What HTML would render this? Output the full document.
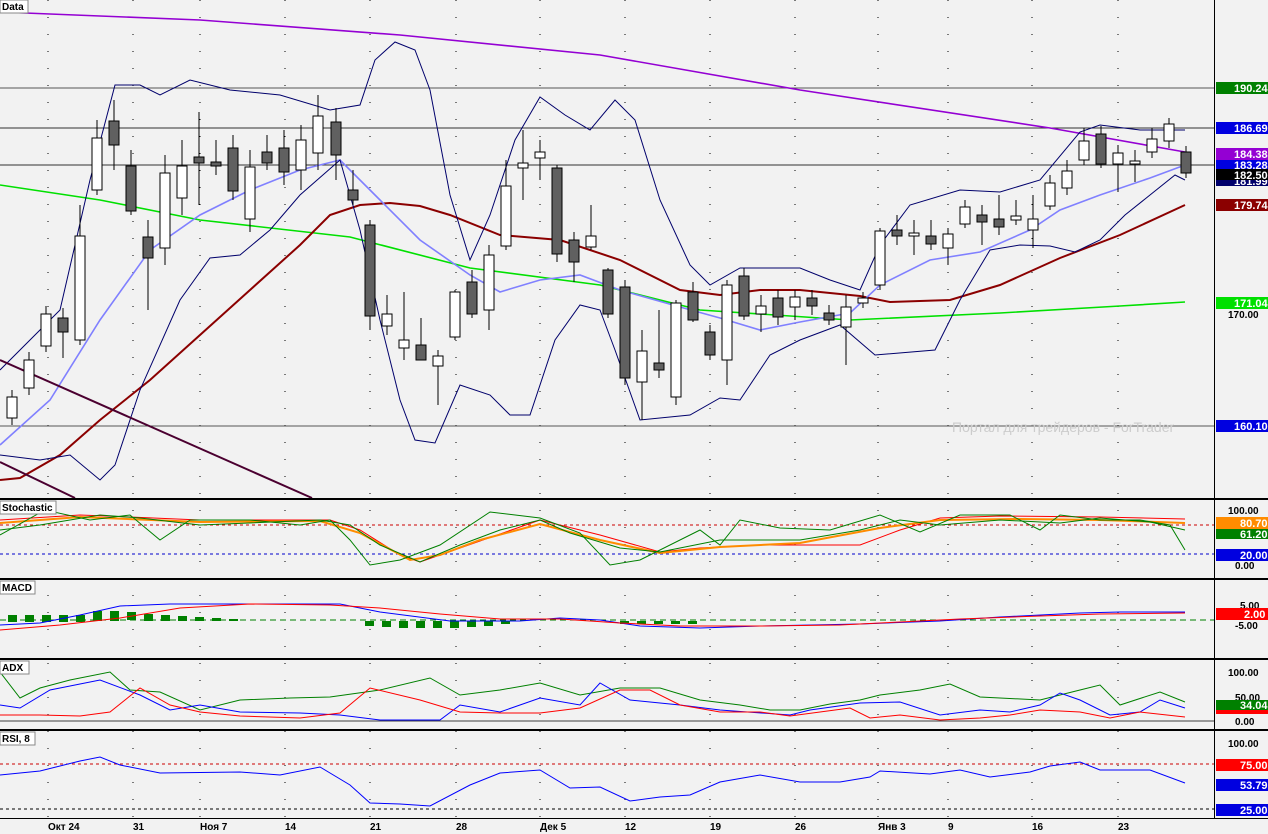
<!DOCTYPE html><html><head><meta charset="utf-8"><style>
body{margin:0;background:#f2f2f2;width:1268px;height:834px;overflow:hidden;font-family:"Liberation Sans",sans-serif}
svg{display:block}
text{font-family:"Liberation Sans",sans-serif;font-size:10px;font-weight:bold}
.lb{fill:#fff;font-size:11px}
</style></head><body>
<svg width="1268" height="834" viewBox="0 0 1268 834">
<rect width="1268" height="834" fill="#f2f2f2"/>
<g stroke="#000" stroke-width="1" stroke-dasharray="1,16" fill="none">
<line x1="48" y1="0" x2="48" y2="818"/><line x1="133" y1="0" x2="133" y2="818"/><line x1="200" y1="0" x2="200" y2="818"/><line x1="285" y1="0" x2="285" y2="818"/><line x1="370" y1="0" x2="370" y2="818"/><line x1="456" y1="0" x2="456" y2="818"/><line x1="540" y1="0" x2="540" y2="818"/><line x1="625" y1="0" x2="625" y2="818"/><line x1="710" y1="0" x2="710" y2="818"/><line x1="795" y1="0" x2="795" y2="818"/><line x1="878" y1="0" x2="878" y2="818"/><line x1="948" y1="0" x2="948" y2="818"/><line x1="1032" y1="0" x2="1032" y2="818"/><line x1="1118" y1="0" x2="1118" y2="818"/>
</g>
<!-- horizontal lines -->
<g stroke-width="1">
<line x1="0" y1="88" x2="1214" y2="88" stroke="#555"/>
<line x1="0" y1="128" x2="1214" y2="128" stroke="#333"/>
<line x1="0" y1="165" x2="1214" y2="165" stroke="#333"/>
<line x1="0" y1="426" x2="1214" y2="426" stroke="#555"/>
</g>
<text x="952" y="432" style="font-size:14px;font-weight:normal;fill:#ccc">Портал для трейдеров - ForTrader</text>
<g fill="none" stroke-width="1.6">
<polyline stroke="#9400d3" points="0,12 200,20 400,35 600,55 800,90 1050,128 1185,152"/>
<polyline stroke="#00e000" points="0,185 100,200 200,220 350,237 470,268 600,285 700,310 850,320 1000,313 1120,306 1185,302"/>
<polyline stroke="#8b0000" stroke-width="2" points="0,480 20,478 60,455 100,420 150,380 200,335 250,290 300,245 330,215 360,205 390,203 420,206 450,215 500,235 560,240 620,260 680,290 720,295 760,290 800,290 860,296 890,302 950,300 1000,285 1060,258 1120,235 1185,205"/>
<polyline stroke="#8080ff" points="0,445 50,400 100,320 150,250 200,215 250,190 300,170 340,160 380,200 420,240 470,275 500,292 540,280 580,275 620,290 680,307 720,318 760,330 800,322 850,313 880,285 930,260 980,252 1030,230 1060,210 1100,195 1150,178 1185,165"/>
<polyline stroke="#00006b" stroke-width="1" points="0,370 60,310 90,180 115,85 140,85 160,95 190,80 230,90 280,95 330,110 360,105 375,60 395,42 415,50 430,90 450,195 470,260 490,215 515,140 540,97 565,115 590,130 615,100 635,120 660,200 690,265 710,285 740,268 800,268 830,280 860,290 880,245 910,205 960,190 1000,192 1040,180 1080,132 1100,125 1140,130 1185,130"/>
<polyline stroke="#00006b" stroke-width="1" points="0,455 40,460 70,455 100,480 115,465 140,390 180,300 210,258 240,255 270,230 300,195 340,160 360,230 380,320 400,400 415,440 435,443 460,385 490,395 510,415 530,415 555,340 580,305 600,310 615,350 640,420 690,415 720,398 740,400 770,355 800,340 840,325 875,355 935,350 960,300 990,250 1020,245 1050,246 1075,252 1100,240 1125,215 1150,195 1175,175 1185,180"/>
<line x1="0" y1="360" x2="312" y2="498" stroke="#4b0030" stroke-width="2"/>
<line x1="0" y1="462" x2="75" y2="498" stroke="#4b0030" stroke-width="2"/>
</g>
<g stroke="#000" stroke-width="1">
<!-- candles: wick + body -->
<g id="c">
<line x1="12" y1="390" x2="12" y2="425"/><rect x="7" y="397" width="10" height="21" fill="#fff"/>
<line x1="29" y1="352" x2="29" y2="395"/><rect x="24" y="360" width="10" height="28" fill="#fff"/>
<line x1="46" y1="306" x2="46" y2="352"/><rect x="41" y="314" width="10" height="32" fill="#fff"/>
<line x1="63" y1="308" x2="63" y2="358"/><rect x="58" y="318" width="10" height="14" fill="#606060"/>
<line x1="80" y1="205" x2="80" y2="345"/><rect x="75" y="236" width="10" height="104" fill="#fff"/>
<line x1="97" y1="120" x2="97" y2="195"/><rect x="92" y="138" width="10" height="52" fill="#fff"/>
<line x1="114" y1="100" x2="114" y2="170"/><rect x="109" y="121" width="10" height="24" fill="#606060"/>
<line x1="131" y1="150" x2="131" y2="215"/><rect x="126" y="166" width="10" height="45" fill="#606060"/>
<line x1="148" y1="220" x2="148" y2="310"/><rect x="143" y="237" width="10" height="21" fill="#606060"/>
<line x1="165" y1="155" x2="165" y2="265"/><rect x="160" y="173" width="10" height="75" fill="#fff"/>
<line x1="182" y1="140" x2="182" y2="215"/><rect x="177" y="166" width="10" height="32" fill="#fff"/>
<line x1="199" y1="112" x2="199" y2="205"/><rect x="194" y="157" width="10" height="6" fill="#606060"/>
<line x1="216" y1="140" x2="216" y2="175"/><rect x="211" y="162" width="10" height="4" fill="#606060"/>
<line x1="233" y1="135" x2="233" y2="200"/><rect x="228" y="148" width="10" height="43" fill="#606060"/>
<line x1="250" y1="150" x2="250" y2="232"/><rect x="245" y="167" width="10" height="52" fill="#fff"/>
<line x1="267" y1="135" x2="267" y2="170"/><rect x="262" y="152" width="10" height="11" fill="#606060"/>
<line x1="284" y1="130" x2="284" y2="185"/><rect x="279" y="148" width="10" height="24" fill="#606060"/>
<line x1="301" y1="125" x2="301" y2="190"/><rect x="296" y="140" width="10" height="30" fill="#fff"/>
<line x1="318" y1="95" x2="318" y2="170"/><rect x="313" y="116" width="10" height="37" fill="#fff"/>
<line x1="336" y1="108" x2="336" y2="180"/><rect x="331" y="122" width="10" height="33" fill="#606060"/>
<line x1="353" y1="170" x2="353" y2="205"/><rect x="348" y="190" width="10" height="10" fill="#606060"/>
<line x1="370" y1="220" x2="370" y2="330"/><rect x="365" y="225" width="10" height="91" fill="#606060"/>
<line x1="387" y1="295" x2="387" y2="335"/><rect x="382" y="314" width="10" height="12" fill="#fff"/>
<line x1="404" y1="292" x2="404" y2="360"/><rect x="399" y="340" width="10" height="8" fill="#fff"/>
<line x1="421" y1="318" x2="421" y2="360"/><rect x="416" y="345" width="10" height="15" fill="#606060"/>
<line x1="438" y1="350" x2="438" y2="405"/><rect x="433" y="356" width="10" height="10" fill="#fff"/>
<line x1="455" y1="290" x2="455" y2="340"/><rect x="450" y="292" width="10" height="45" fill="#fff"/>
<line x1="472" y1="270" x2="472" y2="318"/><rect x="467" y="282" width="10" height="32" fill="#606060"/>
<line x1="489" y1="245" x2="489" y2="330"/><rect x="484" y="255" width="10" height="55" fill="#fff"/>
<line x1="506" y1="160" x2="506" y2="250"/><rect x="501" y="186" width="10" height="60" fill="#fff"/>
<line x1="523" y1="130" x2="523" y2="200"/><rect x="518" y="163" width="10" height="5" fill="#fff"/>
<line x1="540" y1="140" x2="540" y2="180"/><rect x="535" y="152" width="10" height="6" fill="#fff"/>
<line x1="557" y1="165" x2="557" y2="262"/><rect x="552" y="168" width="10" height="86" fill="#606060"/>
<line x1="574" y1="232" x2="574" y2="282"/><rect x="569" y="240" width="10" height="22" fill="#606060"/>
<line x1="591" y1="205" x2="591" y2="250"/><rect x="586" y="236" width="10" height="11" fill="#fff"/>
<line x1="608" y1="268" x2="608" y2="318"/><rect x="603" y="270" width="10" height="44" fill="#606060"/>
<line x1="625" y1="280" x2="625" y2="385"/><rect x="620" y="287" width="10" height="91" fill="#606060"/>
<line x1="642" y1="330" x2="642" y2="420"/><rect x="637" y="351" width="10" height="31" fill="#fff"/>
<line x1="659" y1="310" x2="659" y2="378"/><rect x="654" y="363" width="10" height="7" fill="#606060"/>
<line x1="676" y1="300" x2="676" y2="405"/><rect x="671" y="303" width="10" height="94" fill="#fff"/>
<line x1="693" y1="282" x2="693" y2="322"/><rect x="688" y="292" width="10" height="28" fill="#606060"/>
<line x1="710" y1="325" x2="710" y2="360"/><rect x="705" y="332" width="10" height="23" fill="#606060"/>
<line x1="727" y1="280" x2="727" y2="385"/><rect x="722" y="285" width="10" height="75" fill="#fff"/>
<line x1="744" y1="268" x2="744" y2="320"/><rect x="739" y="276" width="10" height="40" fill="#606060"/>
<line x1="761" y1="295" x2="761" y2="332"/><rect x="756" y="306" width="10" height="8" fill="#fff"/>
<line x1="778" y1="290" x2="778" y2="325"/><rect x="773" y="298" width="10" height="19" fill="#606060"/>
<line x1="795" y1="290" x2="795" y2="320"/><rect x="790" y="297" width="10" height="10" fill="#fff"/>
<line x1="812" y1="290" x2="812" y2="315"/><rect x="807" y="298" width="10" height="8" fill="#606060"/>
<line x1="829" y1="305" x2="829" y2="325"/><rect x="824" y="313" width="10" height="7" fill="#606060"/>
<line x1="846" y1="295" x2="846" y2="365"/><rect x="841" y="307" width="10" height="20" fill="#fff"/>
<line x1="863" y1="292" x2="863" y2="308"/><rect x="858" y="298" width="10" height="5" fill="#fff"/>
<line x1="880" y1="228" x2="880" y2="290"/><rect x="875" y="231" width="10" height="54" fill="#fff"/>
<line x1="897" y1="215" x2="897" y2="245"/><rect x="892" y="230" width="10" height="6" fill="#606060"/>
<line x1="914" y1="220" x2="914" y2="255"/><rect x="909" y="233" width="10" height="3" fill="#fff"/>
<line x1="931" y1="220" x2="931" y2="250"/><rect x="926" y="236" width="10" height="8" fill="#606060"/>
<line x1="948" y1="228" x2="948" y2="265"/><rect x="943" y="234" width="10" height="14" fill="#fff"/>
<line x1="965" y1="200" x2="965" y2="228"/><rect x="960" y="207" width="10" height="17" fill="#fff"/>
<line x1="982" y1="205" x2="982" y2="245"/><rect x="977" y="215" width="10" height="7" fill="#606060"/>
<line x1="999" y1="195" x2="999" y2="235"/><rect x="994" y="219" width="10" height="8" fill="#606060"/>
<line x1="1016" y1="200" x2="1016" y2="225"/><rect x="1011" y="216" width="10" height="4" fill="#fff"/>
<line x1="1033" y1="195" x2="1033" y2="248"/><rect x="1028" y="219" width="10" height="11" fill="#fff"/>
<line x1="1050" y1="175" x2="1050" y2="210"/><rect x="1045" y="183" width="10" height="23" fill="#fff"/>
<line x1="1067" y1="160" x2="1067" y2="195"/><rect x="1062" y="171" width="10" height="17" fill="#fff"/>
<line x1="1084" y1="128" x2="1084" y2="165"/><rect x="1079" y="141" width="10" height="19" fill="#fff"/>
<line x1="1101" y1="126" x2="1101" y2="168"/><rect x="1096" y="134" width="10" height="30" fill="#606060"/>
<line x1="1118" y1="145" x2="1118" y2="192"/><rect x="1113" y="153" width="10" height="11" fill="#fff"/>
<line x1="1135" y1="150" x2="1135" y2="182"/><rect x="1130" y="161" width="10" height="3" fill="#fff"/>
<line x1="1152" y1="128" x2="1152" y2="158"/><rect x="1147" y="139" width="10" height="13" fill="#fff"/>
<line x1="1169" y1="118" x2="1169" y2="148"/><rect x="1164" y="124" width="10" height="17" fill="#fff"/>
<line x1="1186" y1="146" x2="1186" y2="178"/><rect x="1181" y="152" width="10" height="21" fill="#606060"/>
</g>
</g>

<!-- stochastic -->
<g fill="none" stroke-width="1">
<line x1="0" y1="525" x2="1214" y2="525" stroke="#c00" stroke-dasharray="3,3"/>
<line x1="0" y1="554" x2="1214" y2="554" stroke="#00c" stroke-dasharray="3,3"/>
<polyline stroke="#f00" points="0,520 80,515 130,517 200,520 330,520 360,530 400,555 420,562 460,548 540,520 600,535 660,552 700,548 760,545 860,545 900,530 940,518 1000,516 1100,517 1185,519"/>
<polyline stroke="#ff8c00" stroke-width="2" points="0,523 80,517 200,522 320,521 360,533 410,560 440,555 480,540 540,524 600,540 660,553 720,547 800,543 880,528 940,520 1020,519 1100,520 1185,523"/>
<polyline stroke="#008000" points="0,530 40,525 100,515 140,518 200,525 320,520 350,525 380,545 420,562 460,545 500,530 540,520 570,533 620,548 660,552 720,540 800,540 860,530 900,520 940,525 1000,520 1060,523 1100,518 1150,522 1185,530"/>
<polyline stroke="#008000" points="0,535 45,510 90,520 130,515 160,540 190,520 250,520 300,525 330,520 350,540 370,565 400,560 440,545 490,512 540,518 580,533 610,565 640,560 700,530 720,545 740,520 780,528 830,530 880,515 920,532 960,515 1010,515 1040,530 1060,515 1100,520 1140,520 1170,525 1185,550"/>
</g>
<!-- MACD -->
<g fill="none">
<line x1="0" y1="620" x2="1214" y2="620" stroke="#008000" stroke-dasharray="6,4"/>
<g fill="#008000">
<rect x="8" y="615" width="9" height="7"/><rect x="25" y="615" width="9" height="7"/><rect x="42" y="615" width="9" height="7"/><rect x="59" y="615" width="9" height="7"/><rect x="76" y="615" width="9" height="7"/><rect x="93" y="611" width="9" height="10"/><rect x="110" y="611" width="9" height="10"/><rect x="127" y="612" width="9" height="8"/><rect x="144" y="614" width="9" height="7"/><rect x="161" y="615" width="9" height="6"/><rect x="178" y="616" width="9" height="5"/><rect x="195" y="617" width="9" height="4"/><rect x="212" y="618" width="9" height="3"/><rect x="229" y="619" width="9" height="2"/>
<rect x="365" y="621" width="9" height="5"/><rect x="382" y="621" width="9" height="6"/><rect x="399" y="621" width="9" height="7"/><rect x="416" y="621" width="9" height="7"/><rect x="433" y="621" width="9" height="7"/><rect x="450" y="621" width="9" height="7"/><rect x="467" y="621" width="9" height="6"/><rect x="484" y="621" width="9" height="5"/><rect x="501" y="621" width="9" height="3"/>
<rect x="620" y="621" width="9" height="3"/><rect x="637" y="621" width="9" height="3"/><rect x="654" y="621" width="9" height="3"/><rect x="671" y="621" width="9" height="3"/><rect x="688" y="621" width="9" height="3"/>
</g>
<polyline stroke="#00f" points="0,625 40,623 80,615 120,606 170,604 250,604 340,604 380,612 450,621 520,621 560,618 600,620 640,626 700,628 760,626 860,624 940,621 1000,617 1080,613 1120,612 1185,612"/>
<polyline stroke="#f00" points="0,630 60,625 120,618 180,608 250,604 330,605 380,608 440,614 500,619 560,619 620,623 680,626 760,626 840,625 900,622 960,619 1040,616 1100,614 1185,613"/>
</g>
<!-- ADX -->
<g fill="none">
<polyline stroke="#008000" points="0,672 20,698 40,688 70,680 110,672 130,690 160,692 200,710 240,700 290,698 330,697 380,690 430,678 460,695 500,690 540,683 580,695 620,688 660,688 700,700 740,705 770,710 800,710 830,704 860,700 880,695 920,690 950,684 980,697 1000,698 1040,700 1080,690 1100,685 1120,705 1160,692 1185,702"/>
<polyline stroke="#00f" points="0,705 20,708 50,690 100,680 140,695 170,710 200,705 240,712 300,713 340,715 380,720 440,720 460,705 500,712 540,698 580,705 600,683 630,700 680,705 720,710 790,715 810,710 860,703 900,702 940,715 980,710 1010,712 1040,705 1060,693 1080,700 1110,715 1140,712 1160,700 1185,708"/>
<polyline stroke="#f00" points="0,715 40,715 80,716 110,712 140,688 170,705 200,712 240,716 300,718 340,713 370,688 420,700 460,712 500,713 540,713 580,708 620,690 650,690 680,705 720,712 760,712 790,716 820,712 850,708 870,718 900,715 940,720 980,718 1010,715 1040,710 1080,712 1110,718 1140,712 1185,717"/>
<line x1="0" y1="721" x2="1214" y2="721" stroke="#000" stroke-width="0.8"/>
</g>
<!-- RSI -->
<g fill="none">
<line x1="0" y1="764" x2="1214" y2="764" stroke="#c00" stroke-dasharray="3,3"/>
<line x1="0" y1="809" x2="1214" y2="809" stroke="#000" stroke-dasharray="3,3"/>
<polyline stroke="#00f" points="0,775 40,771 80,761 100,757 120,765 160,773 240,772 280,775 320,767 350,785 370,803 400,804 430,806 470,785 500,773 540,770 570,788 600,787 630,801 660,797 690,795 720,782 760,775 800,782 840,782 870,777 880,771 930,774 960,770 990,777 1030,772 1050,766 1080,762 1100,770 1150,770 1185,783"/>
</g>

<!-- panel separators -->
<g fill="#000">
<rect x="0" y="498" width="1268" height="2"/>
<rect x="0" y="578" width="1268" height="2"/>
<rect x="0" y="658" width="1268" height="2"/>
<rect x="0" y="729" width="1268" height="2"/>
<rect x="0" y="818" width="1268" height="1"/>
<rect x="1214" y="0" width="1" height="818"/>
</g>
<!-- panel titles -->
<g>
<rect x="0" y="0" width="28" height="13" fill="#fff" stroke="#888"/><text x="2" y="10">Data</text>
<rect x="0" y="501" width="56" height="13" fill="#fff" stroke="#888"/><text x="2" y="511">Stochastic</text>
<rect x="0" y="581" width="35" height="13" fill="#fff" stroke="#888"/><text x="2" y="591">MACD</text>
<rect x="0" y="661" width="29" height="13" fill="#fff" stroke="#888"/><text x="2" y="671">ADX</text>
<rect x="0" y="732" width="35" height="13" fill="#fff" stroke="#888"/><text x="2" y="742">RSI, 8</text>
</g>
<!-- axis labels -->
<g>
<text x="1228" y="318">170.00</text>
<text x="1228" y="514">100.00</text><text x="1235" y="569">0.00</text>
<text x="1240" y="609">5.00</text><text x="1235" y="629">-5.00</text>
<text x="1228" y="676">100.00</text><text x="1235" y="701">50.00</text><text x="1235" y="725">0.00</text>
<text x="1228" y="747">100.00</text>
</g>
<g>
<rect x="1216" y="82" width="52" height="12" fill="#008000"/><text class="lb" x="1234" y="92">190.24</text>
<rect x="1216" y="122" width="52" height="12" fill="#0000e0"/><text class="lb" x="1234" y="132">186.69</text>
<rect x="1216" y="148" width="52" height="12" fill="#9400d3"/><text class="lb" x="1234" y="158">184.38</text>
<rect x="1216" y="160" width="52" height="10" fill="#0000e0"/><text class="lb" x="1234" y="169">183.28</text>
<rect x="1216" y="176" width="52" height="10" fill="#00006b"/><text class="lb" x="1234" y="185">181.99</text>
<rect x="1216" y="169" width="52" height="11" fill="#000"/><text class="lb" x="1234" y="179">182.50</text>
<rect x="1216" y="199" width="52" height="12" fill="#8b0000"/><text class="lb" x="1234" y="209">179.74</text>
<rect x="1216" y="297" width="52" height="12" fill="#00e000"/><text class="lb" x="1234" y="307">171.04</text>
<rect x="1216" y="420" width="52" height="12" fill="#0000e0"/><text class="lb" x="1234" y="430">160.10</text>
<rect x="1216" y="517" width="52" height="12" fill="#ff8c00"/><text class="lb" x="1240" y="527">80.70</text>
<rect x="1216" y="529" width="52" height="10" fill="#008000"/><text class="lb" x="1240" y="538">61.20</text>
<rect x="1216" y="549" width="52" height="12" fill="#0000e0"/><text class="lb" x="1240" y="559">20.00</text>
<rect x="1216" y="608" width="52" height="12" fill="#f00"/><text class="lb" x="1244" y="618">2.00</text>
<rect x="1216" y="708" width="52" height="6" fill="#f00"/>
<rect x="1216" y="700" width="52" height="10" fill="#008000"/><text class="lb" x="1240" y="709">34.04</text>
<rect x="1216" y="759" width="52" height="12" fill="#f00"/><text class="lb" x="1240" y="769">75.00</text>
<rect x="1216" y="779" width="52" height="12" fill="#0000e0"/><text class="lb" x="1240" y="789">53.79</text>
<rect x="1216" y="804" width="52" height="12" fill="#0000e0"/><text class="lb" x="1240" y="814">25.00</text>
</g>
<!-- time axis -->
<g font-weight="normal">
<text x="48" y="830">Окт 24</text><text x="133" y="830">31</text><text x="200" y="830">Ноя 7</text><text x="285" y="830">14</text><text x="370" y="830">21</text><text x="456" y="830">28</text><text x="540" y="830">Дек 5</text><text x="625" y="830">12</text><text x="710" y="830">19</text><text x="795" y="830">26</text><text x="878" y="830">Янв 3</text><text x="948" y="830">9</text><text x="1032" y="830">16</text><text x="1118" y="830">23</text>
</g>
</svg>
</body></html>
